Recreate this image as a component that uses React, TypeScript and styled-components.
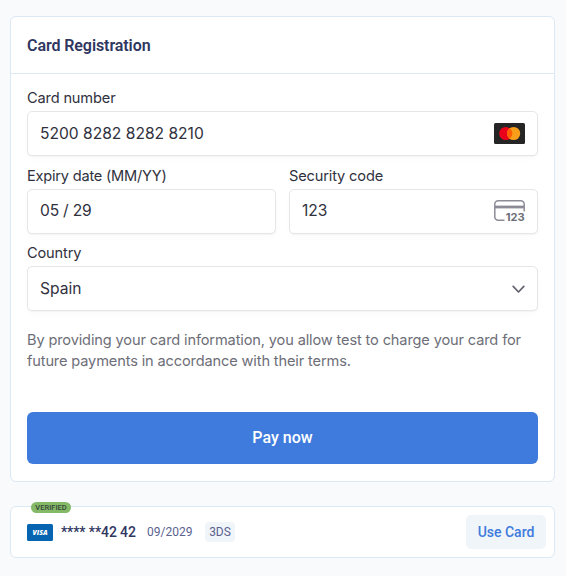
import React from "react";
import styled, { createGlobalStyle } from "styled-components";

const GlobalStyle = createGlobalStyle`
  * { box-sizing: border-box; }
  body { margin: 0; background: #f8fafc; font-family: Roboto, sans-serif; }
`;

const Page = styled.main`
  width: 566px;
  height: 576px;
  padding: 16px 11px 0 10px;
  background: #f8fafc;
  overflow: hidden;
`;

const Panel = styled.section`
  height: 466px;
  background: #fff;
  border: 1px solid #dce8f4;
  border-radius: 6px;
`;

const PanelHeader = styled.header`
  height: 57px;
  padding: 2px 16px 0;
  display: flex;
  align-items: center;
  border-bottom: 1px solid #dce8f4;
`;

const Title = styled.h1`
  margin: 0;
  font: 600 16px/20px Roboto, sans-serif;
  letter-spacing: -0.08px;
  color: #2f365f;
`;

const Form = styled.form`
  padding: 16px 16px 0;
  font-family: Inter, sans-serif;
  color: #30313d;
`;

const Row = styled.div`
  display: grid;
  grid-template-columns: 1fr 1fr;
  gap: 13px;
`;

const Field = styled.div`
  height: 77.5px;
`;

const Label = styled.label<{ $track?: number }>`
  display: block;
  height: 21px;
  font-size: 14.6px;
  line-height: 17px;
  letter-spacing: ${(p) => p.$track ?? -0.15}px;
  white-space: nowrap;
`;

const Control = styled.div`
  height: 45px;
  padding: 0 12px;
  display: flex;
  align-items: center;
  justify-content: space-between;
  background: #fff;
  border: 1px solid #e6e6e6;
  border-radius: 5px;
  box-shadow: 0 1px 1px rgba(0, 0, 0, 0.03), 0 3px 6px rgba(0, 0, 0, 0.02);
`;

const Value = styled.span<{ $track?: number }>`
  font-size: 15.6px;
  line-height: 20px;
  letter-spacing: ${(p) => p.$track ?? 0}px;
  white-space: pre;
`;

const Terms = styled.p`
  margin: 0;
  padding-top: 7px;
  height: 89.5px;
  font-size: 14.6px;
  line-height: 21.5px;
  letter-spacing: -0.14px;
  color: #6d6e78;
  white-space: nowrap;
`;

const PayButton = styled.button`
  display: block;
  width: 100%;
  height: 52px;
  border: 0;
  border-radius: 6px;
  background: #3e7bdc;
  color: #fff;
  font: 500 16px/20px Roboto, sans-serif;
`;

const SavedCard = styled.section`
  position: relative;
  height: 52px;
  margin-top: 24px;
  padding: 0 8px 0 16px;
  display: flex;
  align-items: center;
  background: #fff;
  border: 1px solid #dce8f4;
  border-radius: 6px;
`;

const Verified = styled.span`
  position: absolute;
  left: 20px;
  top: -5px;
  width: 40px;
  height: 11px;
  border-radius: 6px;
  background: #84b967;
  color: #36463a;
  font: 500 7.5px/11px Roboto, sans-serif;
  text-align: center;
`;

const Digits = styled.span`
  width: 86px;
  margin-left: 8px;
  font-size: 14px;
  font-weight: 500;
  letter-spacing: -0.1px;
  line-height: 20px;
  color: #2f365f;
  white-space: nowrap;
`;

const Expiry = styled.span`
  width: 58px;
  font-size: 12px;
  color: #5b6290;
`;

const Tag = styled.span`
  width: 30px;
  height: 20px;
  border-radius: 4px;
  background: #f0f5fa;
  color: #5b6290;
  font-size: 12px;
  line-height: 20px;
  text-align: center;
`;

const UseButton = styled.button`
  width: 80px;
  height: 34px;
  margin-left: auto;
  padding: 0;
  border: 0;
  border-radius: 5px;
  background: #f0f5fa;
  color: #3e7bdc;
  font: 500 14px/20px Roboto, sans-serif;
`;

const IconText = styled.text`
  font-family: Inter, sans-serif;
  font-weight: 700;
`;

const Mastercard = () => (
  <svg width="31" height="21" viewBox="0 0 31 21">
    <rect width="31" height="21" rx="1.5" fill="#252525" />
    <circle cx="11.8" cy="10.5" r="6.6" fill="#eb001b" />
    <circle cx="19.6" cy="10.5" r="6.6" fill="#f79e1b" />
    <path d="M15.7 5.18a6.6 6.6 0 0 1 0 10.64 6.6 6.6 0 0 1 0-10.64Z" fill="#ff5f00" />
  </svg>
);

const SecurityIcon = () => (
  <svg width="31" height="22" viewBox="0 0 31 22">
    <path
      d="M10.5 20.3H4.2a3.4 3.4 0 0 1-3.4-3.4V4.2A3.4 3.4 0 0 1 4.2.8h22.6a3.4 3.4 0 0 1 3.4 3.4v7.3"
      fill="none"
      stroke="#8d8c96"
      strokeWidth="1.5"
    />
    <path d="M1 5.6h29v2.8H1Z" fill="#8d8c96" />
    <IconText x="11.8" y="20.9" fontSize="10.5" textLength="19" lengthAdjust="spacingAndGlyphs" fill="#6d6e78">123</IconText>
  </svg>
);

const ChevronIcon = styled.svg`
  margin-top: 2px;
`;

const Chevron = () => (
  <ChevronIcon width="13" height="9" viewBox="0 0 13 9">
    <path d="M1.2 1.4 6.5 7l5.3-5.6" fill="none" stroke="#62636e" strokeWidth="1.7" strokeLinecap="round" strokeLinejoin="round" />
  </ChevronIcon>
);

const VisaText = styled.text`
  font-family: "Open Sans", sans-serif;
  font-weight: 800;
  font-style: italic;
`;

const Visa = () => (
  <svg width="26" height="17" viewBox="0 0 26 17">
    <rect width="26" height="17" rx="1.5" fill="#0664b1" />
    <VisaText x="5.5" y="11.2" fontSize="7" textLength="15" lengthAdjust="spacingAndGlyphs" fill="#fff">VISA</VisaText>
  </svg>
);

export default function App() {
  return (
    <Page>
      <GlobalStyle />
      <Panel>
        <PanelHeader>
          <Title>Card Registration</Title>
        </PanelHeader>
        <Form onSubmit={(e) => e.preventDefault()}>
          <Field>
            <Label>Card number</Label>
            <Control>
              <Value>5200 8282 8282 8210</Value>
              <Mastercard />
            </Control>
          </Field>
          <Row>
            <Field>
              <Label $track={-0.22}>Expiry date (MM/YY)</Label>
              <Control><Value $track={-0.2}>05 / 29</Value></Control>
            </Field>
            <Field>
              <Label>Security code</Label>
              <Control><Value>123</Value><SecurityIcon /></Control>
            </Field>
          </Row>
          <Field>
            <Label>Country</Label>
            <Control><Value>Spain</Value><Chevron /></Control>
          </Field>
          <Terms>
            By providing your card information, you allow test to charge your card for<br />
            future payments in accordance with their terms.
          </Terms>
          <PayButton>Pay now</PayButton>
        </Form>
      </Panel>
      <SavedCard>
        <Verified>VERIFIED</Verified>
        <Visa />
        <Digits>**** **42 42</Digits>
        <Expiry>09/2029</Expiry>
        <Tag>3DS</Tag>
        <UseButton>Use Card</UseButton>
      </SavedCard>
    </Page>
  );
}
